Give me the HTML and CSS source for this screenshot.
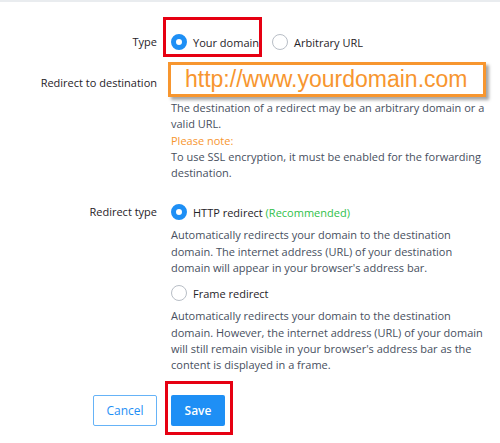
FILE: index.html
```html
<html>
<head>
  <title>Redirect settings</title>
  <link rel="stylesheet" href="styles.css">
</head>
<body>
<div class="topline"></div>

<form class="redirect-form">
  <!-- тип -->
  <div class="row row-type">
    <div class="label">Type</div>
    <div class="value options">
      <label class="option marked">
        <span class="radio checked"></span>
        <span>Your domain</span>
      </label>
      <label class="option">
        <span class="radio"></span>
        <span>Arbitrary URL</span>
      </label>
    </div>
  </div>

  <!-- адрес -->
  <div class="row row-dest">
    <div class="label">Redirect to destination</div>
    <div class="value">
      <div class="url-box">http://www.yourdomain.com</div>
      <p class="hint first">The destination of a redirect may be an arbitrary domain or a valid URL.</p>
      <p class="hint note">Please note:</p>
      <p class="hint">To use SSL encryption, it must be enabled for the forwarding destination.</p>
    </div>
  </div>

  <!-- тип редиректа -->
  <div class="row row-redirect">
    <div class="label">Redirect type</div>
    <div class="value">
      <label class="option">
        <span class="radio checked"></span>
        <span>HTTP redirect <span class="recommended">(Recommended)</span></span>
      </label>
      <p class="hint desc">Automatically redirects your domain to the destination domain. The internet address (URL) of your destination domain will appear in your browser's address bar.</p>
      <label class="option option-second">
        <span class="radio"></span>
        <span>Frame redirect</span>
      </label>
      <p class="hint desc">Automatically redirects your domain to the destination domain. However, the internet address (URL) of your domain will still remain visible in your browser's address bar as the content is displayed in a frame.</p>
    </div>
  </div>

  <div class="row row-buttons">
    <div class="label buttons-left">
      <button type="button" class="btn btn-cancel">Cancel</button>
    </div>
    <div class="value">
      <span class="save-mark">
        <button type="button" class="btn btn-save">Save</button>
      </span>
    </div>
  </div>
</form>

</body>
</html>
```

FILE: styles.css
```css
body {
  margin: 0;
  padding: 0;
  background-color: #fff;
  color: #1f2328;
  font-family: "Open Sans", sans-serif;
  font-size: 11px;
}

.topline {
  height: 2px;
  background-color: #e9ecef;
}

.redirect-form {
  padding-top: 28px;
}

.row {
  display: grid;
  grid-template-columns: 157px 1fr;
  column-gap: 14px;
  padding-right: 12px;
}

.label {
  text-align: right;
  line-height: 24px;
}

.value p {
  margin: 0;
}

/* радиокнопки */
.options {
  display: flex;
  gap: 13px;
}

.option {
  display: flex;
  align-items: center;
  gap: 6px;
  height: 24px;
}

.option.marked {
  position: relative;
}

/* красная рамка-пометка */
.option.marked::after {
  content: "";
  position: absolute;
  top: -13px;
  bottom: -3px;
  left: -8px;
  right: -3px;
  border: 3px solid #e60012;
}

.radio {
  width: 16px;
  height: 16px;
  border-radius: 50%;
  border: 1px solid #b8bec6;
  box-sizing: border-box;
  background-color: #fff;
}

.radio.checked {
  border: 5px solid #1e8ff5;
}

.row-dest {
  margin-top: 8px;
}

.row-dest .label {
  padding-top: 9px;
}

.url-box {
  margin-left: -3px;
  width: 298px;
  padding: 0 0 0 14px;
  border: 3px solid #f7962f;
  box-shadow: 3px 3px 3px rgba(0, 0, 0, 0.35);
  color: #f7962f;
  font-family: "Liberation Sans", Arial, sans-serif;
  font-size: 23px;
  line-height: 29px;
}

.hint {
  color: #474f5e;
  line-height: 16.3px;
}

.hint.first {
  margin-top: 3px;
}

.note {
  color: #f7962f;
}

.recommended {
  color: #2fbf4a;
}

.row-redirect {
  margin-top: 19px;
}

.desc {
  margin-top: 3px !important;
}

.option-second {
  margin-top: 5px;
}

.row-buttons {
  margin-top: 21px;
}

.buttons-left {
  display: flex;
  justify-content: flex-end;
}

.btn {
  height: 31px;
  border-radius: 2px;
  font-family: "Open Sans", sans-serif;
  font-size: 12px;
  font-weight: 600;
}

.btn-cancel {
  width: 64px;
  background-color: #fff;
  color: #1e8ff5;
  border: 1px solid #66b3f7;
  font-weight: 500;
}

.btn-save {
  width: 54px;
  background-color: #1e8ff5;
  color: #fff;
  border: none;
}

.save-mark {
  display: inline-block;
  position: relative;
}

.save-mark::after {
  content: "";
  position: absolute;
  top: -14px;
  bottom: -9px;
  left: -6px;
  right: -8px;
  border: 3px solid #e60012;
}
```
